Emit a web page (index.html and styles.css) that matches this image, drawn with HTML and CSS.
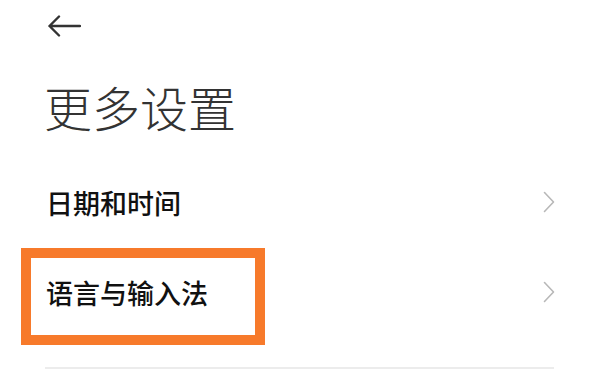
FILE: index.html
```html
<!DOCTYPE html>
<html lang="zh-CN">
<head>
  <meta charset="UTF-8">
  <title>更多设置</title>
  <link rel="stylesheet" href="styles.css">
</head>
<body>
  <div class="page">
    <div class="topbar">
      <svg class="back" width="34" height="22" viewBox="0 0 34 22">
        <path d="M33 11H2.5M12 1.5L2.5 11L12 20.5" fill="none" stroke="#333" stroke-width="2.4" stroke-linecap="round" stroke-linejoin="round"/>
      </svg>
    </div>

    <h1 class="title">更多设置</h1>

    <div class="list">
      <div class="row">
        <span class="label">日期和时间</span>
        <svg class="chev" width="12" height="22" viewBox="0 0 12 22">
          <path d="M1.5 1.5L10.5 11L1.5 20.5" fill="none" stroke="#b8b8b8" stroke-width="1.6" stroke-linecap="round" stroke-linejoin="round"/>
        </svg>
      </div>
      <div class="row">
        <span class="label">语言与输入法</span>
        <svg class="chev" width="12" height="22" viewBox="0 0 12 22">
          <path d="M1.5 1.5L10.5 11L1.5 20.5" fill="none" stroke="#b8b8b8" stroke-width="1.6" stroke-linecap="round" stroke-linejoin="round"/>
        </svg>
        <div class="highlight"></div>
      </div>
    </div>
    <div class="divider"></div>
  </div>
</body>
</html>
```

FILE: styles.css
```css
body {
  margin: 0;
  background: #fff;
  font-family: "Noto Sans CJK SC", "Noto Sans", sans-serif;
  color: #111;
}

.page { padding: 0 46px 0 45px; }

.topbar { height: 52px; display: flex; align-items: center; }
.back { display: block; margin-left: 2px; }

.title {
  margin: 24px 0 21px;
  font-size: 48px;
  line-height: 60px;
  font-weight: 300;
  color: #333;
  margin-left: -1px;
}

.row {
  position: relative;
  height: 90px;
  display: flex;
  align-items: center;
  justify-content: space-between;
}
.label { font-size: 27px; font-weight: 500; margin-left: 1px; }
.chev { display: block; margin-right: -1px; }

.highlight {
  position: absolute;
  left: -24px;
  top: 1px;
  width: 244px;
  height: 97px;
  box-sizing: border-box;
  border: 10px solid #f77a2b;
}

.divider { height: 2px; background: #ececec; margin-top: 30px; }
```
